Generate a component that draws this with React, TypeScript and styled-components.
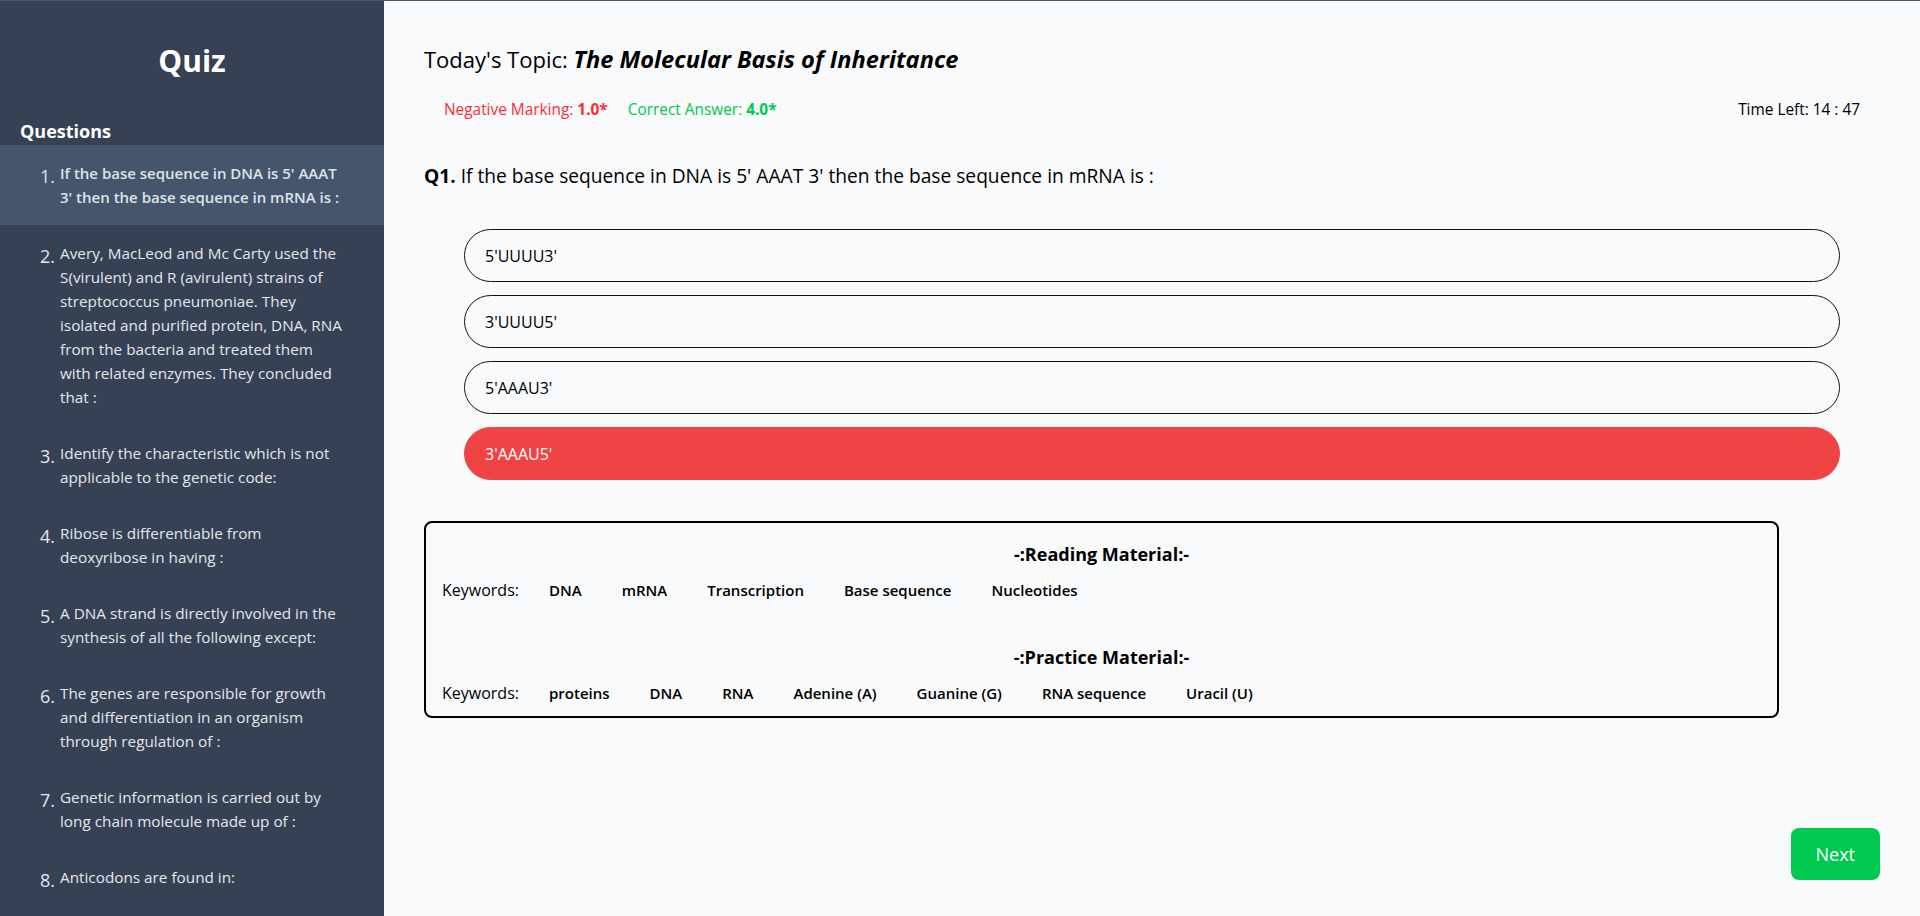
import React from "react";
import styled, { createGlobalStyle } from "styled-components";

const GlobalStyle = createGlobalStyle`
  * { box-sizing: border-box; }
  html, body { margin: 0; padding: 0; height: 100%; }
  body {
    font-family: "Open Sans", "Noto Sans", sans-serif;
    background: #f9fafb;
    color: #000;
    overflow: hidden;
  }
`;

const Page = styled.div`
  display: flex;
  height: 100vh;
  border-top: 1px solid #4b5563;
`;

const Sidebar = styled.aside`
  width: 384px;
  flex-shrink: 0;
  background: #364153;
  color: #fff;
  display: flex;
  flex-direction: column;
  padding-top: 42px;
  overflow: hidden;
`;

const SideTitle = styled.h1`
  margin: 0;
  text-align: center;
  font-size: 30px;
  line-height: 36px;
  font-weight: 700;
`;

const SideHeading = styled.h2`
  margin: 38px 0 0;
  padding-left: 20px;
  font-size: 18px;
  line-height: 28px;
  font-weight: 700;
`;

const QList = styled.ol`
  list-style: none;
  margin: 0;
  padding: 0;
  flex: 1;
  overflow-y: auto;
  scrollbar-width: none;
`;

const QItem = styled.li<{ $active?: boolean }>`
  display: flex;
  align-items: flex-start;
  padding: 16px 40px 16px 40px;
  background: ${(p) => (p.$active ? "#45556c" : "transparent")};
  color: ${(p) => (p.$active ? "#dfe3e8" : "#e5e7eb")};
  font-size: ${(p) => (p.$active ? "15px" : "15.3px")};
  line-height: 24px;
  font-weight: ${(p) => (p.$active ? 600 : 400)};
  cursor: pointer;
`;

const QNum = styled.span`
  width: 20px;
  flex-shrink: 0;
  font-size: 18px;
  line-height: 24px;
  font-weight: 400;
  margin-top: 3px;
`;

const QText = styled.span`
  flex: 1;
`;

const Main = styled.main`
  flex: 1;
  display: flex;
  flex-direction: column;
  padding: 40px 40px 36px;
  min-width: 0;
`;

const Topic = styled.h1`
  margin: 0;
  font-size: 22px;
  line-height: 36px;
  font-weight: 400;
  color: #000;
`;

const TopicName = styled.em`
  font-size: 23.6px;
  font-weight: 700;
  font-style: italic;
`;

const InfoRow = styled.div`
  display: flex;
  align-items: center;
  justify-content: space-between;
  margin-top: 21px;
  padding: 0 20px;
  font-size: 15.4px;
  line-height: 24px;
`;

const Marks = styled.div`
  display: flex;
  gap: 20px;
`;

const Mark = styled.span<{ $color: string }>`
  color: ${(p) => p.$color};
  b { font-weight: 700; }
`;

const Timer = styled.span`
  color: #000;
`;

const Question = styled.p`
  margin: 40px 0 0;
  font-size: 19.2px;
  line-height: 28px;
  b { font-weight: 700; }
`;

const Options = styled.div`
  display: flex;
  flex-direction: column;
  gap: 13px;
  margin: 39px 40px 0;
`;

const Option = styled.button<{ $selected?: boolean }>`
  display: flex;
  align-items: center;
  height: 53px;
  padding: 0 20px;
  border-radius: 9999px;
  border: 1px solid ${(p) => (p.$selected ? "#ef4444" : "#111")};
  background: ${(p) => (p.$selected ? "#ef4444" : "transparent")};
  color: ${(p) => (p.$selected ? "#fff" : "#000")};
  font-family: inherit;
  font-size: 16px;
  text-align: left;
  cursor: pointer;
`;

const Material = styled.section`
  margin-top: 41px;
  width: calc(100% - 101px);
  border: 2px solid #000;
  border-radius: 8px;
  padding: 17px 16px 11px;
`;

const MaterialTitle = styled.h3<{ $gap?: number }>`
  margin: ${(p) => p.$gap ?? 0}px 0 0;
  text-align: center;
  font-size: 18px;
  line-height: 28px;
  font-weight: 700;
`;

const KeywordRow = styled.div`
  display: flex;
  align-items: center;
  margin-top: 10px;
  font-size: 16px;
  line-height: 24px;
`;

const KeywordLabel = styled.span`
  margin-right: 10px;
`;

const Keyword = styled.span`
  padding: 0 20px;
  font-size: 15px;
  font-weight: 600;
`;

const Footer = styled.div`
  margin-top: auto;
  display: flex;
  justify-content: flex-end;
`;

const NextButton = styled.button`
  height: 52px;
  padding: 0 25px;
  border: none;
  border-radius: 8px;
  background: #00c950;
  color: #fff;
  font-family: inherit;
  font-size: 18px;
  font-weight: 500;
  cursor: pointer;
`;

const questions = [
  "If the base sequence in DNA is 5' AAAT 3' then the base sequence in mRNA is :",
  "Avery, MacLeod and Mc Carty used the S(virulent) and R (avirulent) strains of streptococcus pneumoniae. They isolated and purified protein, DNA, RNA from the bacteria and treated them with related enzymes. They concluded that :",
  "Identify the characteristic which is not applicable to the genetic code:",
  "Ribose is differentiable from deoxyribose in having :",
  "A DNA strand is directly involved in the synthesis of all the following except:",
  "The genes are responsible for growth and differentiation in an organism through regulation of :",
  "Genetic information is carried out by long chain molecule made up of :",
  "Anticodons are found in:",
];

const options = ["5'UUUU3'", "3'UUUU5'", "5'AAAU3'", "3'AAAU5'"];

const reading = ["DNA", "mRNA", "Transcription", "Base sequence", "Nucleotides"];
const practice = ["proteins", "DNA", "RNA", "Adenine (A)", "Guanine (G)", "RNA sequence", "Uracil (U)"];

export default function App() {
  return (
    <>
      <GlobalStyle />
      <Page>
        <Sidebar>
          <SideTitle>Quiz</SideTitle>
          <SideHeading>Questions</SideHeading>
          <QList>
            {questions.map((q, i) => (
              <QItem key={i} $active={i === 0}>
                <QNum>{i + 1}.</QNum>
                <QText>{q}</QText>
              </QItem>
            ))}
          </QList>
        </Sidebar>
        <Main>
          <Topic>
            Today's Topic: <TopicName>The Molecular Basis of Inheritance</TopicName>
          </Topic>
          <InfoRow>
            <Marks>
              <Mark $color="#fb2c36">
                Negative Marking: <b>1.0*</b>
              </Mark>
              <Mark $color="#00c950">
                Correct Answer: <b>4.0*</b>
              </Mark>
            </Marks>
            <Timer>Time Left: 14 : 47</Timer>
          </InfoRow>
          <Question>
            <b>Q1.</b> If the base sequence in DNA is 5' AAAT 3' then the base sequence in mRNA is :
          </Question>
          <Options>
            {options.map((o, i) => (
              <Option key={o} $selected={i === 3}>
                {o}
              </Option>
            ))}
          </Options>
          <Material>
            <MaterialTitle>-:Reading Material:-</MaterialTitle>
            <KeywordRow>
              <KeywordLabel>Keywords:</KeywordLabel>
              {reading.map((k) => (
                <Keyword key={k}>{k}</Keyword>
              ))}
            </KeywordRow>
            <MaterialTitle $gap={41}>-:Practice Material:-</MaterialTitle>
            <KeywordRow>
              <KeywordLabel>Keywords:</KeywordLabel>
              {practice.map((k) => (
                <Keyword key={k}>{k}</Keyword>
              ))}
            </KeywordRow>
          </Material>
          <Footer>
            <NextButton>Next</NextButton>
          </Footer>
        </Main>
      </Page>
    </>
  );
}
